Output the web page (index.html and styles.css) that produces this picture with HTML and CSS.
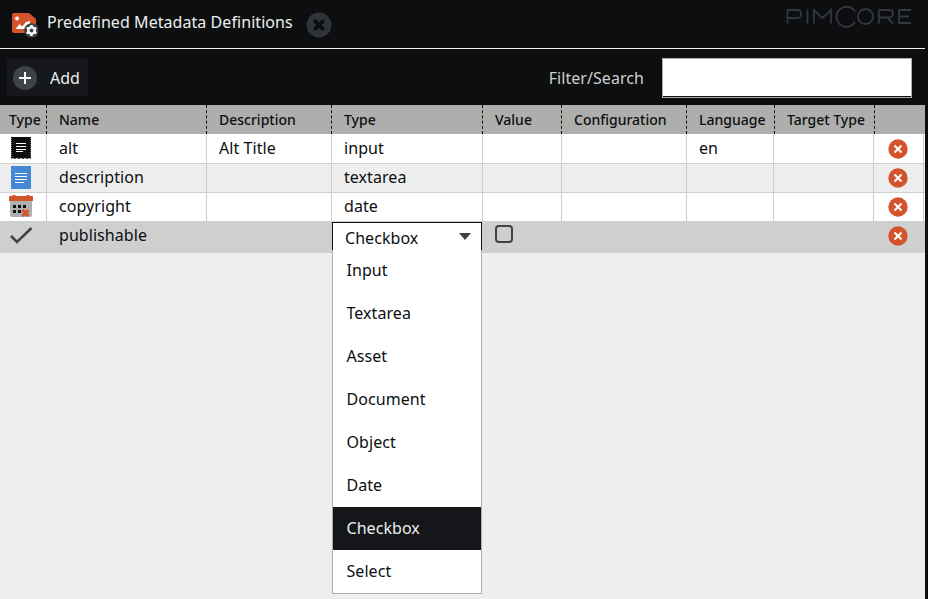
FILE: index.html
```html
<!DOCTYPE html>
<html lang="en">
<head>
<meta charset="utf-8">
<title>Predefined Metadata Definitions</title>
<link rel="stylesheet" href="styles.css">
</head>
<body>
<div class="panel">
  <header class="titlebar">
    <svg class="title-icon" width="28" height="26" viewBox="0 0 28 26">
      <path d="M3 1h16l7 6v10q0 4-4 4H4q-2 0-2-2V3q0-2 2-2z" fill="#d3532a"/>
      <circle cx="7" cy="6.500" r="1.900" fill="#fff"/>
      <path d="M5.500 17l4-5 2.500 2.500L16 10l4-1v8z" fill="#fff"/>
      <circle cx="21.500" cy="18.500" r="7.300" fill="#3e4348"/>
      <circle cx="21.500" cy="18.500" r="3.200" fill="none" stroke="#fff" stroke-width="2.400"/>
      <path d="M21.500 13v2M21.500 22v2M16.700 15.700l1.800 1M24.500 20.300l1.800 1M16.700 21.300l1.800-1M24.500 16.700l1.800-1" stroke="#fff" stroke-width="2.400"/>
    </svg>
    <h1>Predefined Metadata Definitions</h1>
    <svg class="close" width="26" height="26" viewBox="0 0 26 26">
      <circle cx="13" cy="13" r="12.500" fill="#303338"/>
      <path d="M7.500 7.500l3.500 .5 2 2.500 2-2.500 3.500-.5-.5 3.500-2.500 2 2.500 2 .5 3.500-3.500-.5-2-2.500-2 2.500-3.500 .5 .5-3.500 2.500-2-2.500-2z" fill="#0c0e10"/>
    </svg>
    <svg class="brand" width="126" height="24" viewBox="0 0 126 24" fill="none" stroke="#34383d" stroke-width="1.800">
      <path d="M2.500 19.500V6H13q3 0 3 4t-3 4H3M22.500 5.500v14M29 19.500V6l8.500 8 8.500-8v13.500M70 7.500a10 10 0 1 0 0 10.500M94 19.500V6h11q3 0 3 3.500t-3 4H94M102 13.500l6 6M126 6h-12v13h12M114 12.500h10"/>
      <circle cx="80.500" cy="12.500" r="7.500"/>
    </svg>
  </header>
  <div class="toolbar">
    <button class="add">
      <svg width="24" height="24" viewBox="0 0 24 24"><circle cx="12" cy="12" r="12" fill="#3e4348"/><path d="M12 6v12M6 12h12" stroke="#fff" stroke-width="2"/></svg>
      <span>Add</span>
    </button>
    <label class="search"><span>Filter/Search</span><input type="text"></label>
  </div>
  <div class="grid">
    <div class="row head">
      <div>Type</div><div>Name</div><div>Description</div><div>Type</div><div>Value</div><div>Configuration</div><div>Language</div><div>Target Type</div><div></div>
    </div>
    <div class="row">
      <div class="icon"><svg width="22" height="24" viewBox="0 0 22 24"><path d="M1 1h20v22l-2-1-2 1-2-1-2 1-2-1-2 1-2-1-2 1-2-1-2 1z" fill="#0c0e10"/><path d="M1.500 2v21M20.500 2v21" stroke="#777" stroke-dasharray="1 1"/><path d="M6 7.500h10M6 10.500h10M6 13.500h10M6 15.500h7" stroke="#fff" stroke-width="1.200"/></svg></div>
      <div>alt</div><div>Alt Title</div><div>input</div><div></div><div></div><div>en</div><div></div>
      <div class="delete"><svg width="20" height="20" viewBox="0 0 20 20"><circle cx="10" cy="10" r="9.700" fill="#d3532a"/><path d="M6.500 6.500l7 7M13.500 6.500l-7 7" stroke="#fff" stroke-width="2.100"/></svg></div>
    </div>
    <div class="row alt">
      <div class="icon"><svg width="22" height="24" viewBox="0 0 22 24"><path d="M1 1h20v23H1z" fill="#4488d6"/><path d="M5 8.500h12M5 11.500h12M5 14.500h12M5 17.500h9" stroke="#fff" stroke-width="1.100"/></svg></div>
      <div>description</div><div></div><div>textarea</div><div></div><div></div><div></div><div></div>
      <div class="delete"><svg width="20" height="20" viewBox="0 0 20 20"><circle cx="10" cy="10" r="9.700" fill="#d3532a"/><path d="M6.500 6.500l7 7M13.500 6.500l-7 7" stroke="#fff" stroke-width="2.100"/></svg></div>
    </div>
    <div class="row">
      <div class="icon"><svg width="24" height="24" viewBox="0 0 24 24"><path d="M1 7h22v14q0 2-2 2H3q-2 0-2-2z" fill="#aeaeac"/><path d="M0 7V3q0-1 1-1h2l1-1h2l1 1h10l1-1h2l1 1h2q1 0 1 1v4z" fill="#d3532a"/><path d="M4 11h3v3H4zM9 11h3v3H9zM14 11h3v3h-3zM4 16h3v3H4zM9 16h3v3H9z" fill="#0c0e10"/><path d="M13.500 16l6 6M19.500 16l-6 6" stroke="#d3532a" stroke-width="3"/></svg></div>
      <div>copyright</div><div></div><div>date</div><div></div><div></div><div></div><div></div>
      <div class="delete"><svg width="20" height="20" viewBox="0 0 20 20"><circle cx="10" cy="10" r="9.700" fill="#d3532a"/><path d="M6.500 6.500l7 7M13.500 6.500l-7 7" stroke="#fff" stroke-width="2.100"/></svg></div>
    </div>
    <div class="row selected">
      <div class="icon"><svg width="24" height="24" viewBox="0 0 24 24"><path d="M2 13l6 6L22.500 5" fill="none" stroke="#3e4348" stroke-width="2.500"/></svg></div>
      <div>publishable</div><div></div>
      <div class="editor">
        <div class="combo">
          <div class="field">Checkbox<svg width="12" height="7" viewBox="0 0 12 7"><path d="M0 0h12L6 7z" fill="#3e4348"/></svg></div>
          <ul class="options">
            <li>Input</li><li>Textarea</li><li>Asset</li><li>Document</li><li>Object</li><li>Date</li><li class="active">Checkbox</li><li>Select</li>
          </ul>
        </div>
      </div>
      <div><span class="check"></span></div><div></div><div></div><div></div>
      <div class="delete"><svg width="20" height="20" viewBox="0 0 20 20"><circle cx="10" cy="10" r="9.700" fill="#d3532a"/><path d="M6.500 6.500l7 7M13.500 6.500l-7 7" stroke="#fff" stroke-width="2.100"/></svg></div>
    </div>
  </div>
</div>
</body>
</html>
```
FILE: styles.css
```css
* { box-sizing: border-box; }
body {
  margin: 0;
  height: 599px;
  overflow: hidden;
  background: #0c0e10;
  color: #0c0e10;
  font: 16px/22px "Noto Sans", "Open Sans", sans-serif;
  letter-spacing: .06px;
}
.panel { width: 925px; height: 599px; display: flex; flex-direction: column; }
.titlebar {
  height: 49px;
  display: flex;
  align-items: flex-start;
  border-bottom: 1px solid #eee;
  color: #eee;
}
.title-icon { margin: 12px 0 0 10px; }
h1 { margin: 11px 0 0 9px; width: 259px; font-size: 16px; font-weight: 400; white-space: nowrap; }
.close { margin-top: 12px; }
.brand { margin: 4px 14px 0 auto; }
.toolbar {
  height: 56px;
  display: flex;
  align-items: center;
  justify-content: space-between;
  padding: 1px 13px 0 7px;
}
.add {
  width: 81px;
  height: 37px;
  display: flex;
  align-items: center;
  gap: 13px;
  padding: 0 0 0 6px;
  border: 0;
  background: #16181b;
  color: #eee;
  font: inherit;
}
.add span { padding-top: 1px; }
.search { display: flex; align-items: center; gap: 18px; color: #cfcfcf; }
.search input { width: 250px; height: 40px; border: 1px solid #aeaeac; background: #fff; box-shadow: inset 0 -1px #0c0e10; }
.grid { flex: 1; background: #eee; }
.row {
  display: grid;
  grid-template-columns: 47px 160px 125px 151px 79px 125px 87px 100px 50px;
  height: 29px;
  background: #fff;
  box-shadow: inset 0 -1px #cfcfcf;
}
.row > div { padding: 2px 0 0 12px; border-right: 1px solid #cfcfcf; white-space: nowrap; }
.row:nth-child(2) { height: 30px; }
.row:nth-child(2) > div { padding-top: 3px; }
.row.alt { background: #eee; }
.row.head {
  grid-template-columns: 47px 160px 125px 151px 79px 125px 88px 100px 50px;
  background: #aeaeac;
  box-shadow: none;
  font-size: 14px;
  font-weight: 500;
  letter-spacing: 0;
}
.row.head > div { padding-top: 4px; border-right: 1px dashed #0c0e10; }
.row.head > div:first-child { padding-left: 9px; }
.row.head > div:last-child { border: 0; }
.row.selected { height: 31px; background: #cfcfcf; box-shadow: none; }
.row.selected > div { border-color: transparent; }
.row > .icon { display: flex; justify-content: center; padding: 1px 4px 0 0; }
.row:nth-child(2) > .icon { padding-top: 2px; }
.row > .delete { padding: 3.5px 0 0 13.5px; }
.row:nth-child(2) > .delete { padding-top: 4.5px; }
.row svg { display: block; }
.row > .editor { position: relative; padding: 0; }
.combo { position: absolute; top: 0; left: 0; width: 150px; z-index: 2; background: #fff; }
.field {
  height: 28px;
  display: flex;
  justify-content: space-between;
  padding: 4px 10px 0 12px;
  border: 1px solid #0c0e10;
  border-bottom: 0;
}
.field svg { margin-top: 6px; }
.options { margin: 0; padding: 0; list-style: none; border: 1px solid #aeaeac; border-top: 0; }
.options li { height: 43px; padding: 10px 0 0 13.5px; }
.options li:first-child { height: 42px; padding-top: 9px; }
.options .active { background: #141619; color: #eee; }
.check { display: block; width: 18px; height: 18px; margin-top: 1px; border: 2px solid #3e4348; border-radius: 4px; }
```
